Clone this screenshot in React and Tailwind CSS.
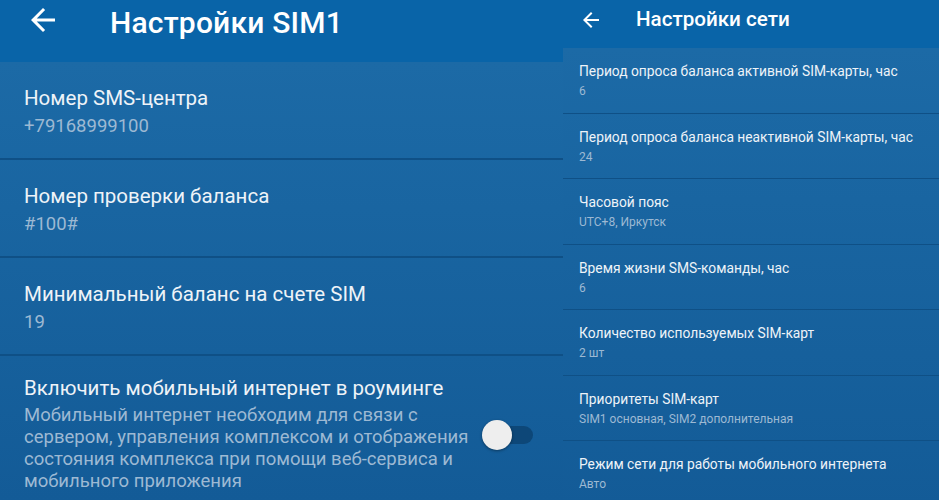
import React from 'react';

const BackArrow = ({ className }) => (
  <svg viewBox="0 0 24 24" className={className} fill="currentColor">
    <path d="M20 11H7.83l5.59-5.59L12 4l-8 8 8 8 1.41-1.41L7.83 13H20v-2z" />
  </svg>
);

const simRows = [
  { title: 'Номер SMS-центра', value: '+79168999100' },
  { title: 'Номер проверки баланса', value: '#100#' },
  { title: 'Минимальный баланс на счете SIM', value: '19' },
];

const netRows = [
  { title: 'Период опроса баланса активной SIM-карты, час', value: '6' },
  { title: 'Период опроса баланса неактивной SIM-карты, час', value: '24' },
  { title: 'Часовой пояс', value: 'UTC+8, Иркутск' },
  { title: 'Время жизни SMS-команды, час', value: '6' },
  { title: 'Количество используемых SIM-карт', value: '2 шт' },
  { title: 'Приоритеты SIM-карт', value: 'SIM1 основная, SIM2 дополнительная' },
  { title: 'Режим сети для работы мобильного интернета', value: 'Авто' },
];

function SimSettings() {
  return (
    <div className="flex h-full w-[563px] shrink-0 flex-col">
      <header className="flex h-[62px] shrink-0 items-start bg-[#0964a8] pt-[2px] text-white">
        <BackArrow className="ml-[25px] h-[36px] w-[36px]" />
        <h1 className="ml-[49px] mt-[4px] text-[30px] leading-[34px] font-medium tracking-[0.2px]">Настройки SIM1</h1>
      </header>
      <div className="flex-1 bg-gradient-to-b from-[#1c6aa6] to-[#135b97]">
        {simRows.map((row) => (
          <div key={row.title} className="h-[98px] border-b-2 border-[#0f5086] px-[24px] pt-[24px]">
            <div className="text-[20.5px] leading-[24px] text-[#eef3f8]">{row.title}</div>
            <div className="mt-[5px] text-[18.5px] leading-[22px] text-[#9db9d3]">{row.value}</div>
          </div>
        ))}
        <div className="flex items-center pl-[24px] pr-[30px] pt-[20px]">
          <div className="w-[445px]">
            <div className="text-[20.5px] leading-[24px] text-[#eef3f8]">Включить мобильный интернет в роуминге</div>
            <div className="mt-[4px] text-[18.5px] leading-[22px] text-[#9db9d3]">
              Мобильный интернет необходим для связи с сервером, управления комплексом и отображения состояния комплекса при помощи веб-сервиса и мобильного приложения
            </div>
          </div>
          <div className="relative ml-auto mt-[2px] h-[30px] w-[51px]">
            <div className="absolute left-[12px] top-[6px] h-[18px] w-[39px] rounded-full bg-[#0d4778]" />
            <div className="absolute left-0 top-0 h-[30px] w-[30px] rounded-full bg-[#eeeeee] shadow-[0_1px_3px_rgba(0,0,0,0.4)]" />
          </div>
        </div>
      </div>
    </div>
  );
}

function NetSettings() {
  return (
    <div className="flex h-full flex-1 flex-col">
      <header className="flex h-[48px] shrink-0 items-start bg-[#0964a8] pt-[8px] text-white">
        <BackArrow className="ml-[16px] h-[24px] w-[24px]" />
        <h1 className="ml-[33px] mt-[-1px] text-[20.6px] leading-[24px] font-medium">Настройки сети</h1>
      </header>
      <div className="flex-1 bg-gradient-to-b from-[#1c6aa6] to-[#135b97]">
        {netRows.map((row) => (
          <div key={row.title} className="h-[65.5px] border-b border-[#0f5086] px-[16px] pt-[13px]">
            <div className="text-[13.8px] leading-[20px] text-[#eef3f8]">{row.title}</div>
            <div className="mt-[2px] text-[12px] leading-[16px] text-[#9db9d3]">{row.value}</div>
          </div>
        ))}
      </div>
    </div>
  );
}

export default function App() {
  return (
    <div className="flex h-[500px] w-[939px] overflow-hidden font-['Roboto',sans-serif]">
      <SimSettings />
      <NetSettings />
    </div>
  );
}
